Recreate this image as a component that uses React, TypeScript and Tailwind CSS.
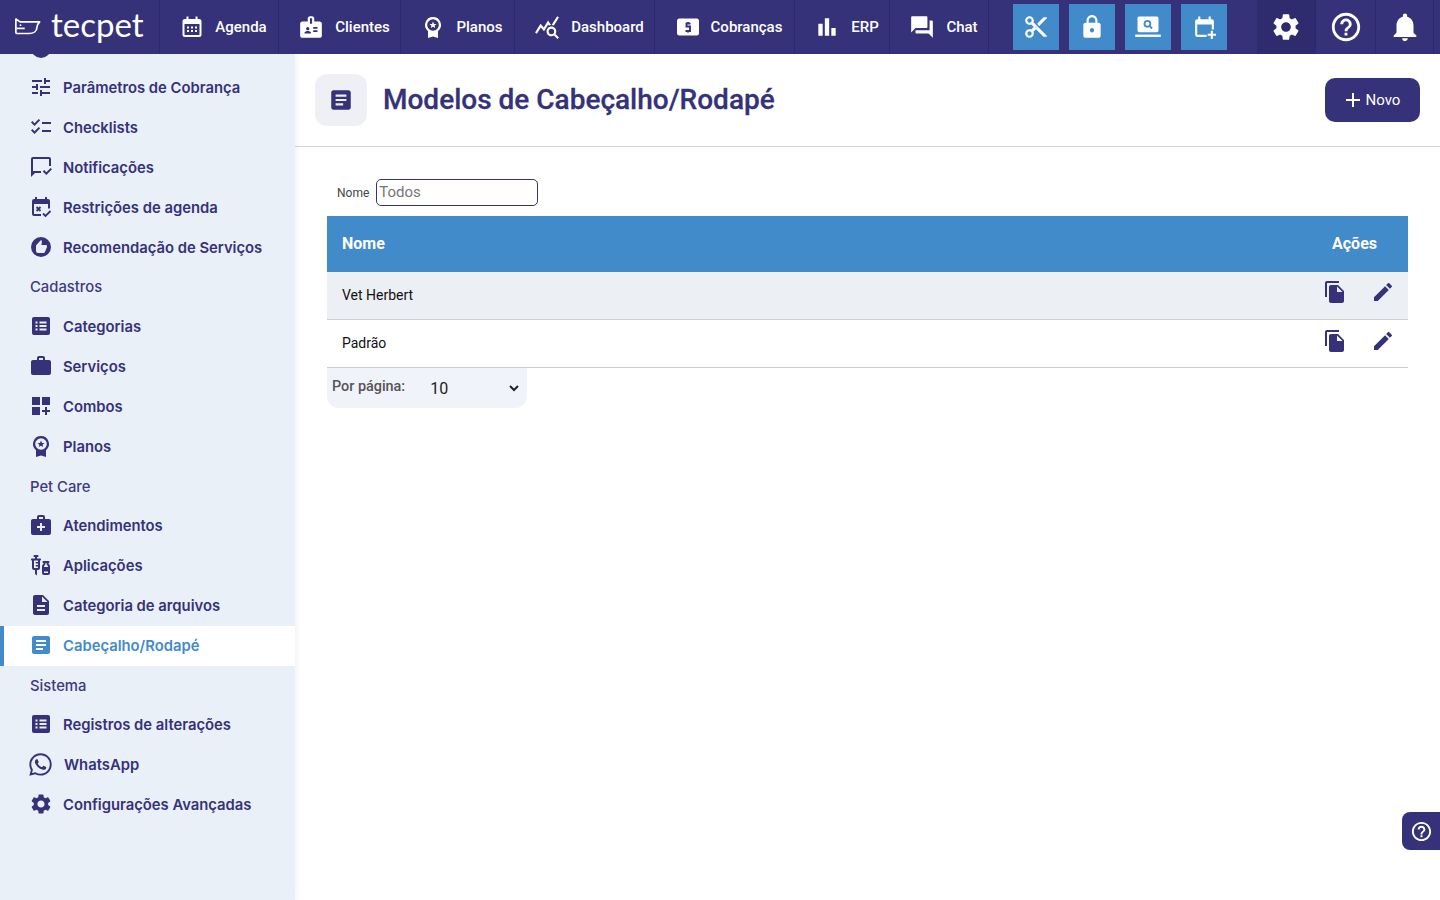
import React from "react";
import {
  MdTune, MdChecklist, MdOutlineMarkChatRead, MdRecommend, MdWork, MdDashboardCustomize,
  MdMedicalServices, MdVaccines, MdDescription, MdArticle, MdWhatsapp, MdSettings, MdBadge,
  MdQueryStats, MdBarChart, MdQuestionAnswer, MdContentCut, MdLock,
  MdHelpOutline, MdNotifications, MdFileCopy, MdEdit, MdAdd,
} from "react-icons/md";

type P = { className?: string };

const Plan = ({ className }: P) => (
  <svg viewBox="0 0 24 24" className={className} fill="currentColor">
    <path fillRule="evenodd" d="M12 2a8 8 0 0 0-5 14.200V23l5-1.600 5 1.600v-6.800A8 8 0 0 0 12 2Zm0 2.200a5.800 5.800 0 1 1 0 11.600 5.800 5.800 0 0 1 0-11.600Z" />
    <path d="m12 6.600 1 2.300 2.500.2-1.900 1.600.6 2.400-2.200-1.300-2.200 1.300.6-2.400-1.900-1.600 2.500-.2Z" />
  </svg>
);
const ListBox = ({ className }: P) => (
  <svg viewBox="0 0 24 24" className={className}>
    <rect x="3" y="3" width="18" height="18" rx="2" fill="currentColor" />
    <path d="M10.500 7.500h7v2h-7Zm0 3.500h7v2h-7Zm0 3.500h7v2h-7ZM6.500 7.500h2v2h-2Zm0 3.500h2v2h-2Zm0 3.500h2v2h-2Z" fill="#eaf0f8" />
  </svg>
);
const CalBlock = ({ className }: P) => (
  <svg viewBox="0 0 24 24" className={className} fill="none">
    <path d="M6 2h2v2h8V2h2v2h1a2 2 0 0 1 2 2v7.500h-2V9H5v10h7v2H5a2 2 0 0 1-2-2V6a2 2 0 0 1 2-2h1Z" fill="currentColor" />
    <path d="m7.500 12 4 4m0-4-4 4M14 18.500l2.500 2.500 5-5" stroke="currentColor" strokeWidth="1.800" />
  </svg>
);
const Agenda = ({ className }: P) => (
  <svg viewBox="0 0 24 24" className={className} fill="currentColor">
    <path fillRule="evenodd" d="M6.500 1.500h2V4h7V1.500h2V4H19a2.500 2.500 0 0 1 2.500 2.500v13A2.500 2.500 0 0 1 19 22H5a2.500 2.500 0 0 1-2.500-2.500v-13A2.500 2.500 0 0 1 5 4h1.500ZM4.500 9v10.500c0 .3.200.5.500.5h14c.3 0 .5-.2.5-.5V9Z" />
    <path d="M7 11.500h2v2H7Zm4 0h2v2h-2Zm4 0h2v2h-2Zm-8 3.500h2v2H7Zm4 0h2v2h-2Zm4 0h2v2h-2Z" />
  </svg>
);
const Money = ({ className }: P) => (
  <svg viewBox="0 0 24 24" className={className}>
    <rect x="1" y="3.500" width="22" height="17" rx="2.500" fill="currentColor" />
    <path d="M14.500 8.500h-4v3h3.500v4.500H9.500M12 7v1.500M12 16v1.500" fill="none" stroke="#35327a" strokeWidth="1.900" />
  </svg>
);
const CalPlus = ({ className }: P) => (
  <svg viewBox="0 0 24 24" className={className} fill="currentColor">
    <path d="M6 1.500h2V4h8V1.500h2V4h1a2 2 0 0 1 2 2v8h-2V9H5v10h9v2H5a2 2 0 0 1-2-2V6a2 2 0 0 1 2-2h1Z" />
    <path d="M18 15h2v3h3v2h-3v3h-2v-3h-3v-2h3Z" />
  </svg>
);
const LaptopSearch = ({ className }: P) => (
  <svg viewBox="0 0 24 24" className={className}>
    <rect x="3" y="3" width="18" height="13.500" rx="1.500" fill="currentColor" />
    <rect x="1" y="18.500" width="22" height="2" fill="currentColor" />
    <circle cx="11.500" cy="9.300" r="2.500" fill="none" stroke="#428bca" strokeWidth="1.600" />
    <path d="m13.300 11.100 2.200 2.200" stroke="#428bca" strokeWidth="1.600" />
  </svg>
);
const Logo = ({ className }: P) => (
  <svg viewBox="0 0 30 24" className={className} fill="none" stroke="currentColor" strokeWidth="1.800">
    <path d="M2 3.500 6.500 6.500H27.500C25 9 24.500 10.500 24.500 12.500C24.500 16.500 21 19 16 19H3.500C2.500 19 2 18.500 2 17.500Z" strokeLinejoin="round" />
    <path d="M2.500 13.500h9" />
    <circle cx="7" cy="10" r="1" fill="currentColor" stroke="none" />
  </svg>
);

const navItems = [
  { label: "Agenda", Icon: Agenda, w: "w-[119px]", size: "size-[24px]" },
  { label: "Clientes", Icon: MdBadge, w: "w-[122px]", size: "size-[26px]" },
  { label: "Planos", Icon: Plan, w: "w-[114px]", size: "size-[24px]" },
  { label: "Dashboard", Icon: MdQueryStats, w: "w-[140px]", size: "size-[26px]" },
  { label: "Cobranças", Icon: Money, w: "w-[140px]", size: "size-[24px]" },
  { label: "ERP", Icon: MdBarChart, w: "w-[95px]", size: "size-[26px]" },
  { label: "Chat", Icon: MdQuestionAnswer, w: "w-[99px]", size: "size-[26px]" },
];

const quick = [
  { Icon: MdContentCut, c: "size-[26px]" },
  { Icon: MdLock, c: "size-[26px]" },
  { Icon: LaptopSearch, c: "size-[28px]" },
  { Icon: CalPlus, c: "size-[25px]" },
];

type Row =
  | { t: "h"; label: string; c?: string }
  | { t: "i"; label: string; Icon: React.ComponentType<P>; active?: boolean; c?: string };
const rows: Row[] = [
  { t: "i", label: "Parâmetros de Cobrança", Icon: MdTune },
  { t: "i", label: "Checklists", Icon: MdChecklist },
  { t: "i", label: "Notificações", Icon: MdOutlineMarkChatRead },
  { t: "i", label: "Restrições de agenda", Icon: CalBlock },
  { t: "i", label: "Recomendação de Serviços", Icon: MdRecommend },
  { t: "h", label: "Cadastros" },
  { t: "i", label: "Categorias", Icon: ListBox },
  { t: "i", label: "Serviços", Icon: MdWork },
  { t: "i", label: "Combos", Icon: MdDashboardCustomize },
  { t: "i", label: "Planos", Icon: Plan },
  { t: "h", label: "Pet Care", c: "pt-[2px]" },
  { t: "i", label: "Atendimentos", Icon: MdMedicalServices },
  { t: "i", label: "Aplicações", Icon: MdVaccines },
  { t: "i", label: "Categoria de arquivos", Icon: MdDescription },
  { t: "i", label: "Cabeçalho/Rodapé", Icon: MdArticle, active: true },
  { t: "h", label: "Sistema", c: "pt-[2px]" },
  { t: "i", label: "Registros de alterações", Icon: ListBox },
  { t: "i", label: "WhatsApp", Icon: MdWhatsapp, c: "size-[27px] -ml-[2px]" },
  { t: "i", label: "Configurações Avançadas", Icon: MdSettings },
];

const tableRows = [
  { name: "Vet Herbert", cls: "bg-[#ecf0f5]", ic: "-mt-[7px]" },
  { name: "Padrão", cls: "bg-white", ic: "-mt-[5px]" },
];

export default function App() {
  return (
    <div className="relative flex h-[900px] w-[1440px] flex-col overflow-hidden bg-white font-['Roboto',sans-serif] text-[#35327a]">
      <header className="z-20 flex h-[54px] shrink-0 items-stretch bg-[#35327a] text-white">
        <div className="flex w-[160px] items-center border-r border-[#2d2a6c] pl-[14px]">
          <Logo className="mr-[9px] h-[24px] w-[28px]" />
          <span className="-mt-[5px] font-['Lato',sans-serif] text-[33px] leading-none font-normal">tecpet</span>
        </div>
        {navItems.map(({ label, Icon, w, size }) => (
          <div key={label} className={`${w} flex items-center justify-center gap-[11px] border-r border-[#2d2a6c] pl-[9px] text-[15px] font-medium`}>
            <Icon className={size} />
            <span>{label}</span>
          </div>
        ))}
        <div className="ml-[24px] flex items-center gap-[10px]">
          {quick.map(({ Icon, c }, i) => (
            <div key={i} className="flex size-[46px] items-center justify-center bg-[#428bca]">
              <Icon className={c} />
            </div>
          ))}
        </div>
        <div className="ml-[30px] flex w-[59px] items-center justify-center border-r border-[#2d2a6c] bg-[#2e2b6e]">
          <MdSettings className="size-[32px]" />
        </div>
        <div className="flex w-[60px] items-center justify-center border-r border-[#2d2a6c]">
          <MdHelpOutline className="size-[34px]" />
        </div>
        <div className="flex w-[58px] items-center justify-center border-r border-[#2d2a6c]">
          <MdNotifications className="size-[34px]" />
        </div>
      </header>

      <div className="flex min-h-0 flex-1">
        <aside className="z-10 w-[295px] shrink-0 overflow-hidden bg-[#eaf0f8] shadow-[0_0_8px_rgba(0,0,0,0.08)]">
          <div className="-mt-[26px] font-['Inter',sans-serif] text-[14.8px] font-semibold">
            <div className="flex h-[40px] items-center pl-[29px]">
              <MdRecommend className="size-[24px]" />
            </div>
            {rows.map((r) =>
              r.t === "h" ? (
                <div key={r.label} className={`flex h-[39px] items-center pl-[30px] font-medium text-[#3d3a80] ${r.c ?? ""}`}>{r.label}</div>
              ) : (
                <div
                  key={r.label}
                  className={`flex h-[40px] items-center gap-[10px] border-l-4 pl-[25px] ${r.active ? "border-[#428bca] bg-white text-[#428bca]" : "border-transparent"}`}
                >
                  <r.Icon className={`-mt-[2px] shrink-0 ${r.c ?? "size-[24px]"}`} />
                  <span>{r.label}</span>
                </div>
              ),
            )}
          </div>
        </aside>

        <main className="min-w-0 flex-1">
          <div className="flex h-[93px] items-center justify-between border-b border-[#d6d6d6] px-[20px]">
            <div className="flex items-center gap-[16px]">
              <div className="flex size-[52px] items-center justify-center rounded-[12px] bg-[#efeff6]">
                <MdArticle className="size-[26px]" />
              </div>
              <h1 className="text-[28px] leading-none font-medium [-webkit-text-stroke:0.3px_#35327a]">Modelos de Cabeçalho/Rodapé</h1>
            </div>
            <button className="flex h-[44px] w-[95px] items-center justify-center gap-[1px] rounded-[10px] bg-[#35327a] pr-[4px] text-[15px] text-white">
              <MdAdd className="size-[24px]" />
              Novo
            </button>
          </div>

          <div className="px-[32px] pt-[32px]">
            <div className="flex h-[27px] items-center gap-[7px] pl-[10px]">
              <label className="text-[12px] text-[#444]">Nome</label>
              <input placeholder="Todos" className="h-[27px] w-[162px] rounded-[5px] border border-[#35327a] px-[2px] pb-[2px] text-[15px] text-[#555] placeholder:text-[#757575]" />
            </div>
            <div className="mt-[10px]">
              <div className="flex h-[56px] items-center justify-between bg-[#428bca] pr-[31px] pl-[15px] text-[16px] font-bold text-white">
                <span>Nome</span>
                <span>Ações</span>
              </div>
              {tableRows.map((r) => (
                <div key={r.name} className={`${r.cls} flex h-[48px] items-center justify-between border-b border-[#cbcfd4] pr-[13px] pl-[15px] text-[14px] text-[#111]`}>
                  <span>{r.name}</span>
                  <div className={`${r.ic} flex items-center gap-[24px] text-[#35327a]`}>
                    <MdFileCopy className="size-[24px]" />
                    <MdEdit className="size-[24px]" />
                  </div>
                </div>
              ))}
              <div className="flex h-[40px] w-[200px] items-center rounded-b-[12px] bg-[#f1f3fa] pl-[5px]">
                <span className="-mt-[2px] text-[14.400px] font-medium text-[#555]">Por página:</span>
                <select defaultValue="10" className="ml-[21px] h-[30px] w-[96px] bg-transparent text-[16px] text-[#222] outline-none">
                  <option value="10">10</option>
                  <option value="25">25</option>
                  <option value="50">50</option>
                </select>
              </div>
            </div>
          </div>
        </main>
      </div>

      <button className="absolute top-[812px] right-0 flex h-[38px] w-[38px] items-center justify-center rounded-l-[8px] bg-[#35327a] text-white">
        <MdHelpOutline className="size-[23px]" />
      </button>
    </div>
  );
}
